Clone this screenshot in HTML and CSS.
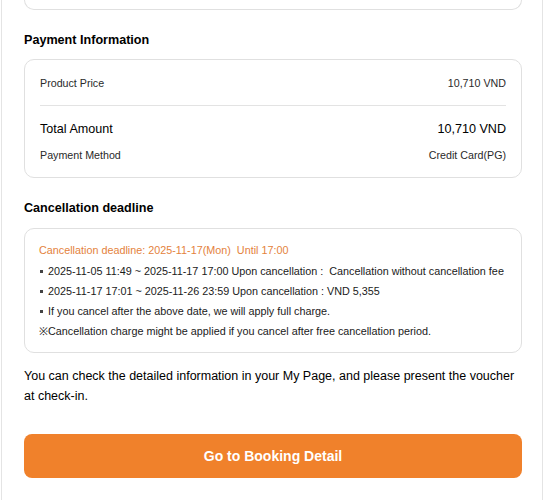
FILE: index.html
```html
<!DOCTYPE html>
<html>
<head>
<meta charset="utf-8">
<link rel="stylesheet" href="styles.css">
</head>
<body>
<div class="page">
  <div class="card card-top"></div>

  <h2 class="section-title">Payment Information</h2>
  <div class="card pay-card">
    <div class="row small">
      <span>Product Price</span>
      <span>10,710 VND</span>
    </div>
    <div class="divider"></div>
    <div class="row total">
      <span>Total Amount</span>
      <span>10,710 VND</span>
    </div>
    <div class="row small method">
      <span>Payment Method</span>
      <span>Credit Card(PG)</span>
    </div>
  </div>

  <h2 class="section-title">Cancellation deadline</h2>
  <div class="card cancel-card">
    <p class="deadline">Cancellation deadline: 2025-11-17(Mon)&nbsp; Until 17:00</p>
    <ul class="rules">
      <li>2025-11-05 11:49 ~ 2025-11-17 17:00 Upon cancellation :&nbsp; Cancellation without cancellation fee</li>
      <li>2025-11-17 17:01 ~ 2025-11-26 23:59 Upon cancellation : VND 5,355</li>
      <li>If you cancel after the above date, we will apply full charge.</li>
    </ul>
    <p class="note">※Cancellation charge might be applied if you cancel after free cancellation period.</p>
  </div>

  <p class="info">You can check the detailed information in your My Page, and please present the voucher at check-in.</p>

  <button class="btn-primary">Go to Booking Detail</button>
</div>
</body>
</html>
```

FILE: styles.css
```css
* { box-sizing: border-box; }
html, body {
  margin: 0;
  padding: 0;
  background: #fff;
}
body {
  font-family: "Liberation Sans", Arial, sans-serif;
  color: #111;
}
.page {
  margin: 0 1px;
  border-left: 1px solid #e4e4e4;
  border-right: 1px solid #e4e4e4;
  padding: 0 20px 40px 22px;
  min-height: 500px;
}
.card {
  border: 1px solid #e0e0e0;
  border-radius: 10px;
  background: #fff;
}
.card-top {
  height: 10px;
  border-top: 0;
  border-radius: 0 0 10px 10px;
}
.section-title {
  margin: 20px 0 9px;
  font-size: 12.6px;
  line-height: 20px;
  font-weight: bold;
  color: #000;
}
.pay-card {
  padding: 15px 15px 14px;
}
.row {
  display: flex;
  justify-content: space-between;
  align-items: center;
}
.small {
  font-size: 10.7px;
  line-height: 16px;
  color: #2a2a2a;
}
.divider {
  height: 1px;
  background: #e3e3e3;
  margin: 14px 0 13px;
}
.total {
  font-size: 12.6px;
  line-height: 20px;
  color: #000;
}
.method {
  margin-top: 8px;
}
.cancel-card {
  margin-top: 10px;
  padding: 11px 15px 11px 14px;
  font-size: 10.8px;
  line-height: 20px;
  color: #1a1a1a;
}
.deadline {
  margin: 0 0 1px;
  color: #e4823c;
}
.rules {
  list-style: none;
  margin: 0;
  padding: 0;
}
.rules li {
  position: relative;
  padding-left: 9px;
}
.rules li::before {
  content: "";
  position: absolute;
  left: 1px;
  top: 9px;
  width: 3px;
  height: 3px;
  background: #444;
}
.note {
  margin: 0;
}
.info {
  margin: 14px 0 0;
  font-size: 12.5px;
  line-height: 19.5px;
  color: #000;
}
.btn-primary {
  display: block;
  width: 100%;
  height: 44px;
  margin-top: 28px;
  border: 0;
  border-radius: 8px;
  background: #f0812b;
  color: #fff;
  font-family: "Liberation Sans", Arial, sans-serif;
  font-size: 14px;
  font-weight: bold;
  cursor: pointer;
}
```
